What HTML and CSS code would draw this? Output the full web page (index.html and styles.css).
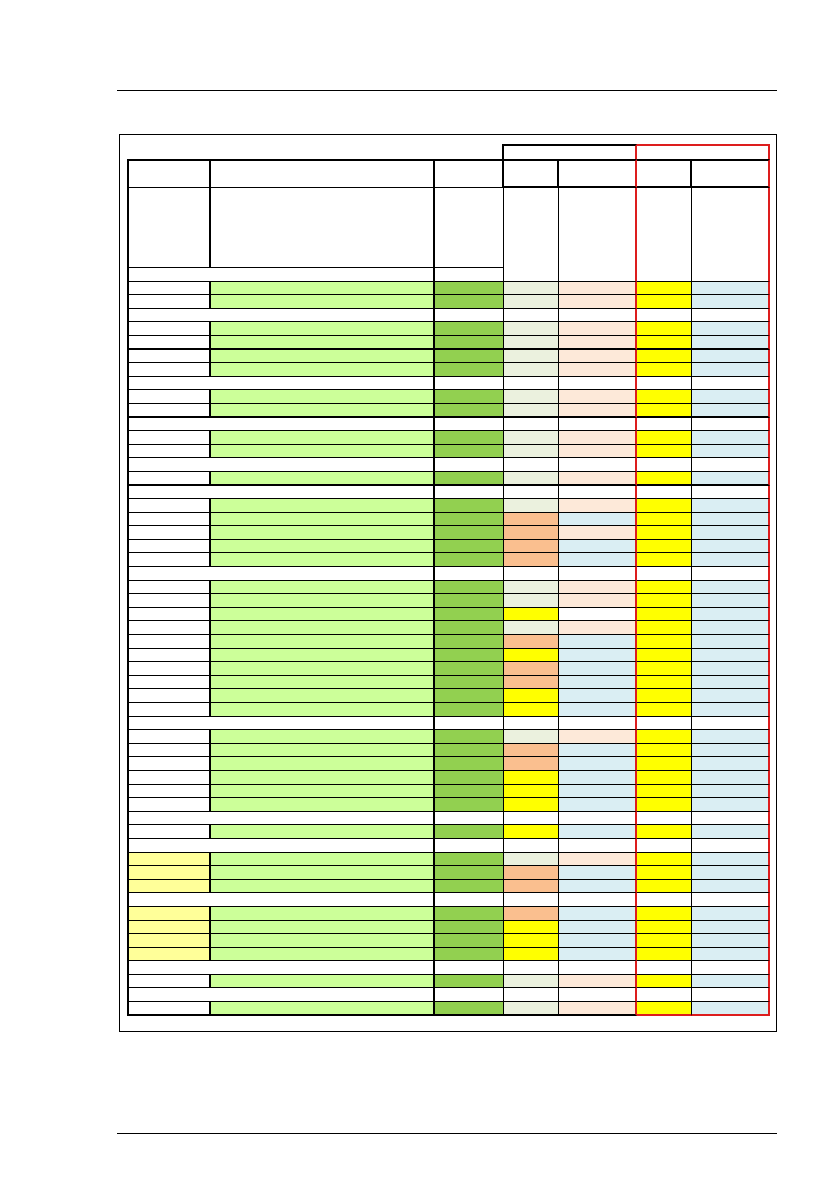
FILE: index.html
```html
<!DOCTYPE html>
<html>
<head>
<meta charset="utf-8">
<link rel="stylesheet" href="styles.css">
</head>
<body>
<div class="page">
  <div class="rule top"></div>
  <div class="frame">
    <div class="grid">
      <div class="row grp"><div class="g0"></div><div class="g1"></div><div class="g2"></div></div>
      <div class="row hdr"><div class="h1"></div><div class="h2"></div><div class="h3"></div><div class="h4"></div><div class="h5"></div><div class="h6"></div><div class="h7"></div></div>
      <div class="row tall"><div class="t1"></div><div class="t2"></div><div class="t3"></div><div class="t4"></div><div class="t5"></div><div class="t6"></div><div class="t7"></div></div>
      <div class="row sec first"><div class="k12"></div><div class="k3"></div></div>

      <div class="row a"><div class="k1"></div><div class="k2"></div><div class="k3"></div><div class="k4"></div><div class="k5"></div><div class="k6"></div><div class="k7"></div></div>
      <div class="row a"><div class="k1"></div><div class="k2"></div><div class="k3"></div><div class="k4"></div><div class="k5"></div><div class="k6"></div><div class="k7"></div></div>
      <div class="row sec"><div class="k12"></div><div class="k3"></div><div class="k4"></div><div class="k5"></div><div class="k6"></div><div class="k7"></div></div>
      <div class="row a"><div class="k1"></div><div class="k2"></div><div class="k3"></div><div class="k4"></div><div class="k5"></div><div class="k6"></div><div class="k7"></div></div>
      <div class="row a thick"><div class="k1"></div><div class="k2"></div><div class="k3"></div><div class="k4"></div><div class="k5"></div><div class="k6"></div><div class="k7"></div></div>
      <div class="row a"><div class="k1"></div><div class="k2"></div><div class="k3"></div><div class="k4"></div><div class="k5"></div><div class="k6"></div><div class="k7"></div></div>
      <div class="row a"><div class="k1"></div><div class="k2"></div><div class="k3"></div><div class="k4"></div><div class="k5"></div><div class="k6"></div><div class="k7"></div></div>
      <div class="row sec"><div class="k12"></div><div class="k3"></div><div class="k4"></div><div class="k5"></div><div class="k6"></div><div class="k7"></div></div>
      <div class="row a"><div class="k1"></div><div class="k2"></div><div class="k3"></div><div class="k4"></div><div class="k5"></div><div class="k6"></div><div class="k7"></div></div>
      <div class="row a thick"><div class="k1"></div><div class="k2"></div><div class="k3"></div><div class="k4"></div><div class="k5"></div><div class="k6"></div><div class="k7"></div></div>
      <div class="row sec"><div class="k12"></div><div class="k3"></div><div class="k4"></div><div class="k5"></div><div class="k6"></div><div class="k7"></div></div>
      <div class="row a"><div class="k1"></div><div class="k2"></div><div class="k3"></div><div class="k4"></div><div class="k5"></div><div class="k6"></div><div class="k7"></div></div>
      <div class="row a"><div class="k1"></div><div class="k2"></div><div class="k3"></div><div class="k4"></div><div class="k5"></div><div class="k6"></div><div class="k7"></div></div>
      <div class="row sec"><div class="k12"></div><div class="k3"></div><div class="k4"></div><div class="k5"></div><div class="k6"></div><div class="k7"></div></div>
      <div class="row a thick"><div class="k1"></div><div class="k2"></div><div class="k3"></div><div class="k4"></div><div class="k5"></div><div class="k6"></div><div class="k7"></div></div>
      <div class="row sec"><div class="k12"></div><div class="k3"></div><div class="k4"></div><div class="k5"></div><div class="k6"></div><div class="k7"></div></div>
      <div class="row a"><div class="k1"></div><div class="k2"></div><div class="k3"></div><div class="k4"></div><div class="k5"></div><div class="k6"></div><div class="k7"></div></div>
      <div class="row b"><div class="k1"></div><div class="k2"></div><div class="k3"></div><div class="k4"></div><div class="k5"></div><div class="k6"></div><div class="k7"></div></div>
      <div class="row c"><div class="k1"></div><div class="k2"></div><div class="k3"></div><div class="k4"></div><div class="k5"></div><div class="k6"></div><div class="k7"></div></div>
      <div class="row b"><div class="k1"></div><div class="k2"></div><div class="k3"></div><div class="k4"></div><div class="k5"></div><div class="k6"></div><div class="k7"></div></div>
      <div class="row b"><div class="k1"></div><div class="k2"></div><div class="k3"></div><div class="k4"></div><div class="k5"></div><div class="k6"></div><div class="k7"></div></div>
      <div class="row sec"><div class="k12"></div><div class="k3"></div><div class="k4"></div><div class="k5"></div><div class="k6"></div><div class="k7"></div></div>
      <div class="row a"><div class="k1"></div><div class="k2"></div><div class="k3"></div><div class="k4"></div><div class="k5"></div><div class="k6"></div><div class="k7"></div></div>
      <div class="row a"><div class="k1"></div><div class="k2"></div><div class="k3"></div><div class="k4"></div><div class="k5"></div><div class="k6"></div><div class="k7"></div></div>
      <div class="row d"><div class="k1"></div><div class="k2"></div><div class="k3"></div><div class="k4"></div><div class="k5"></div><div class="k6"></div><div class="k7"></div></div>
      <div class="row a"><div class="k1"></div><div class="k2"></div><div class="k3"></div><div class="k4"></div><div class="k5"></div><div class="k6"></div><div class="k7"></div></div>
      <div class="row b"><div class="k1"></div><div class="k2"></div><div class="k3"></div><div class="k4"></div><div class="k5"></div><div class="k6"></div><div class="k7"></div></div>
      <div class="row e"><div class="k1"></div><div class="k2"></div><div class="k3"></div><div class="k4"></div><div class="k5"></div><div class="k6"></div><div class="k7"></div></div>
      <div class="row b"><div class="k1"></div><div class="k2"></div><div class="k3"></div><div class="k4"></div><div class="k5"></div><div class="k6"></div><div class="k7"></div></div>
      <div class="row b"><div class="k1"></div><div class="k2"></div><div class="k3"></div><div class="k4"></div><div class="k5"></div><div class="k6"></div><div class="k7"></div></div>
      <div class="row e"><div class="k1"></div><div class="k2"></div><div class="k3"></div><div class="k4"></div><div class="k5"></div><div class="k6"></div><div class="k7"></div></div>
      <div class="row e"><div class="k1"></div><div class="k2"></div><div class="k3"></div><div class="k4"></div><div class="k5"></div><div class="k6"></div><div class="k7"></div></div>
      <div class="row sec"><div class="k12"></div><div class="k3"></div><div class="k4"></div><div class="k5"></div><div class="k6"></div><div class="k7"></div></div>
      <div class="row a"><div class="k1"></div><div class="k2"></div><div class="k3"></div><div class="k4"></div><div class="k5"></div><div class="k6"></div><div class="k7"></div></div>
      <div class="row b"><div class="k1"></div><div class="k2"></div><div class="k3"></div><div class="k4"></div><div class="k5"></div><div class="k6"></div><div class="k7"></div></div>
      <div class="row b"><div class="k1"></div><div class="k2"></div><div class="k3"></div><div class="k4"></div><div class="k5"></div><div class="k6"></div><div class="k7"></div></div>
      <div class="row e"><div class="k1"></div><div class="k2"></div><div class="k3"></div><div class="k4"></div><div class="k5"></div><div class="k6"></div><div class="k7"></div></div>
      <div class="row e"><div class="k1"></div><div class="k2"></div><div class="k3"></div><div class="k4"></div><div class="k5"></div><div class="k6"></div><div class="k7"></div></div>
      <div class="row e"><div class="k1"></div><div class="k2"></div><div class="k3"></div><div class="k4"></div><div class="k5"></div><div class="k6"></div><div class="k7"></div></div>
      <div class="row sec"><div class="k12"></div><div class="k3"></div><div class="k4"></div><div class="k5"></div><div class="k6"></div><div class="k7"></div></div>
      <div class="row e"><div class="k1"></div><div class="k2"></div><div class="k3"></div><div class="k4"></div><div class="k5"></div><div class="k6"></div><div class="k7"></div></div>
      <div class="row sec"><div class="k12"></div><div class="k3"></div><div class="k4"></div><div class="k5"></div><div class="k6"></div><div class="k7"></div></div>
      <div class="row a y"><div class="k1"></div><div class="k2"></div><div class="k3"></div><div class="k4"></div><div class="k5"></div><div class="k6"></div><div class="k7"></div></div>
      <div class="row b y"><div class="k1"></div><div class="k2"></div><div class="k3"></div><div class="k4"></div><div class="k5"></div><div class="k6"></div><div class="k7"></div></div>
      <div class="row b y"><div class="k1"></div><div class="k2"></div><div class="k3"></div><div class="k4"></div><div class="k5"></div><div class="k6"></div><div class="k7"></div></div>
      <div class="row sec"><div class="k12"></div><div class="k3"></div><div class="k4"></div><div class="k5"></div><div class="k6"></div><div class="k7"></div></div>
      <div class="row b y"><div class="k1"></div><div class="k2"></div><div class="k3"></div><div class="k4"></div><div class="k5"></div><div class="k6"></div><div class="k7"></div></div>
      <div class="row e y"><div class="k1"></div><div class="k2"></div><div class="k3"></div><div class="k4"></div><div class="k5"></div><div class="k6"></div><div class="k7"></div></div>
      <div class="row e y"><div class="k1"></div><div class="k2"></div><div class="k3"></div><div class="k4"></div><div class="k5"></div><div class="k6"></div><div class="k7"></div></div>
      <div class="row e y"><div class="k1"></div><div class="k2"></div><div class="k3"></div><div class="k4"></div><div class="k5"></div><div class="k6"></div><div class="k7"></div></div>
      <div class="row sec"><div class="k12"></div><div class="k3"></div><div class="k4"></div><div class="k5"></div><div class="k6"></div><div class="k7"></div></div>
      <div class="row a"><div class="k1"></div><div class="k2"></div><div class="k3"></div><div class="k4"></div><div class="k5"></div><div class="k6"></div><div class="k7"></div></div>
      <div class="row sec"><div class="k12"></div><div class="k3"></div><div class="k4"></div><div class="k5"></div><div class="k6"></div><div class="k7"></div></div>
      <div class="row a last"><div class="k1"></div><div class="k2"></div><div class="k3"></div><div class="k4"></div><div class="k5"></div><div class="k6"></div><div class="k7"></div></div>
    </div>
  </div>
  <div class="rule bottom"></div>
</div>
</body>
</html>
```

FILE: styles.css
```css
html, body {
  margin: 0;
  padding: 0;
  background: #fff;
  font-family: "Liberation Sans", Arial, sans-serif;
}

.page {
  width: 838px;
  height: 1190px;
  padding-top: 90px;
  box-sizing: border-box;
}

.rule {
  width: 660px;
  margin-left: 117px;
  height: 0;
  border-top: 1px solid #000;
}

.rule.bottom {
  margin-top: 101px;
}

.frame {
  width: 658px;
  margin-left: 119px;
  margin-top: 43px;
  box-sizing: border-box;
  border: 1px solid #000;
  padding: 9px 6px 15px 7px;
}

.grid {
  display: grid;
  grid-template-columns: 84px 224px 69px 55px 78px 55px 78px;
  grid-template-rows: 15px 29px 80px;
  grid-auto-rows: 13.6px;
}

.grid div {
  box-sizing: border-box;
}

.row {
  display: contents;
}

/* group row */
.g0 { grid-column: span 3; }
.g1 {
  grid-column: span 2;
  margin-left: -2px;
  border-top: 2px solid #000;
  border-left: 2px solid #000;
  border-right: 2px solid #dd1d1d;
}
.g2 {
  grid-column: span 2;
  border-top: 2px solid #dd1d1d;
  border-right: 2px solid #dd1d1d;
}

/* header row */
.hdr > div {
  border-top: 2px solid #000;
  border-bottom: 2px solid #000;
  border-right: 2px solid #000;
}
.hdr .h1 { border-left: 2px solid #000; }
.hdr .h1, .hdr .h2, .hdr .h3 { border-bottom-width: 1px; }
.hdr .h5, .hdr .h7 { border-right-color: #dd1d1d; }

/* tall descriptive row */
.tall > div { border-bottom: 1px solid #000; }
.t1 { border-left: 2px solid #000; border-right: 2px solid #000; }
.t2 { border-right: 2px solid #000; }
.t3 { border-right: 1px solid #000; }
.t4, .t5, .t6, .t7 { grid-row: span 2; }
.t4 { border-right: 1px solid #000; }
.t5 { border-right: 2px solid #dd1d1d; }
.t6 { border-right: 1px solid #000; }
.t7 { border-right: 2px solid #dd1d1d; }

/* body cells */
.row > .k1, .row > .k12, .row > .k2, .row > .k3,
.row > .k4, .row > .k5, .row > .k6, .row > .k7 {
  border-bottom: 1px solid #000;
}
.k1, .k12 { border-left: 2px solid #000; border-right: 2px solid #000; background: #fff; }
.k12 { grid-column: span 2; }
.k2 { border-right: 2px solid #000; background: #ccff99; }
.k3 { border-right: 1px solid #000; background: #92d050; }
.k4 { border-right: 1px solid #000; }
.k5 { border-right: 2px solid #dd1d1d; }
.k6 { border-right: 1px solid #000; background: #ffff00; }
.k7 { border-right: 2px solid #dd1d1d; background: #daeef3; }

.sec > div { background: #fff; }

.a .k4 { background: #ebf1de; }
.a .k5 { background: #fde9d9; }
.b .k4 { background: #fabf8f; }
.b .k5 { background: #daeef3; }
.c .k4 { background: #fabf8f; }
.c .k5 { background: #fde9d9; }
.d .k4 { background: #ffff00; }
.d .k5 { background: #fff; }
.e .k4 { background: #ffff00; }
.e .k5 { background: #daeef3; }
.y .k1 { background: #ffff99; }

.row.thick > div { border-bottom-width: 2px; }
.row.last > div { border-bottom-width: 2px; }
.row.last > .k6, .row.last > .k7 { border-bottom-color: #dd1d1d; }
```
